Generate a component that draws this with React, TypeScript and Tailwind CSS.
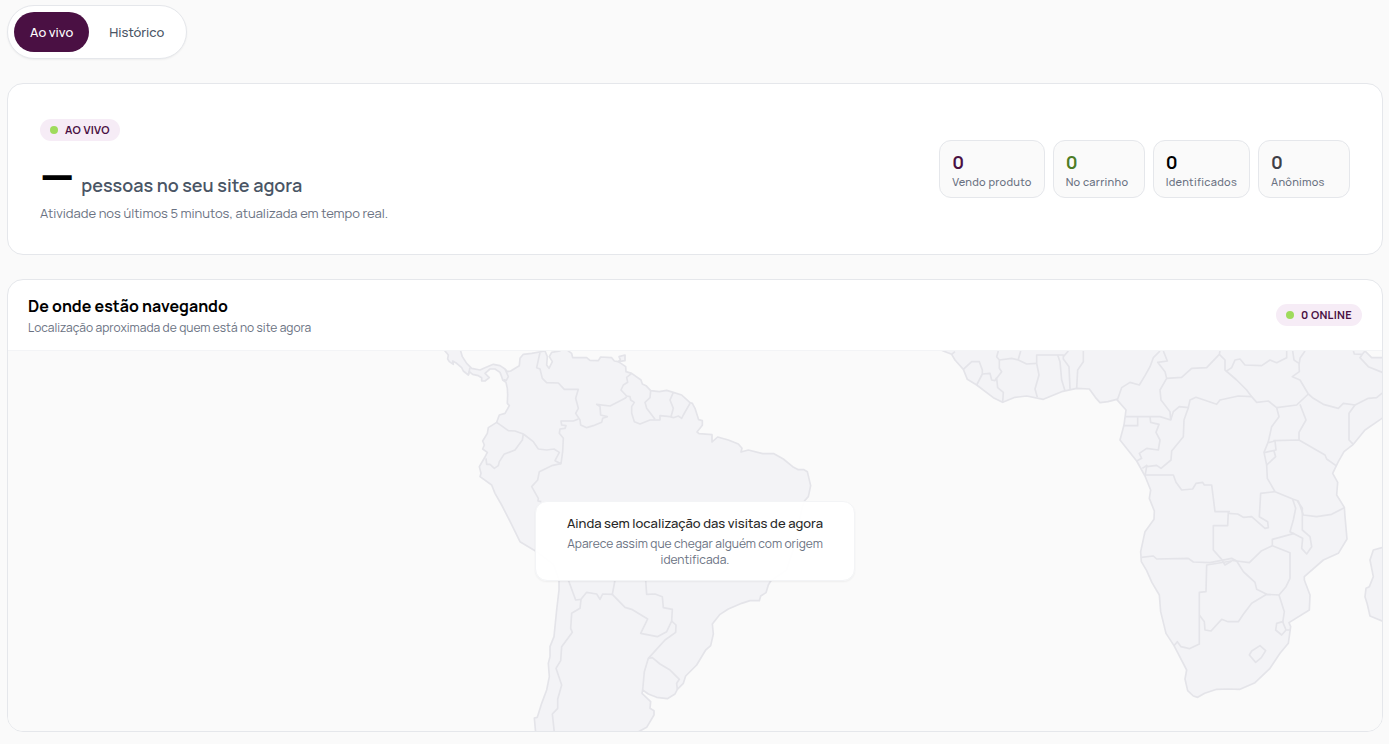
import { useState } from 'react'
import clsx from 'clsx'

const STATS = [
  { label: 'Vendo produto', value: 0, color: 'text-[#4a1043]' },
  { label: 'No carrinho', value: 0, color: 'text-[#4d7c26]' },
  { label: 'Identificados', value: 0, color: 'text-black' },
  { label: 'Anônimos', value: 0, color: 'text-zinc-700' },
]

// Land masses, in map units (3 per pixel at the default width)
const LAND = [
  // Central + South America
  'M1305 -8L1311 0 1321 12 1319 24 1324 32 1336 40 1334 30 1346 37 1361 50 1366 60 1381 72 1384 62 1394 70 1411 74 1421 80 1421 90 1431 90 1444 80 1431 67 1446 54 1461 54 1476 64 1481 77 1484 87 1494 94 1498 112 1499 132 1498 157 1504 164 1491 187 1474 192 1466 214 1441 230 1438 247 1424 270 1429 282 1424 294 1438 304 1431 318 1414 347 1419 367 1416 377 1451 402 1461 427 1481 462 1508 515 1536 572 1581 599 1636 640 1653 687 1653 717 1646 777 1638 857 1626 887 1626 917 1621 937 1624 977 1616 1017 1601 1057 1588 1099 1579 1101 1583 1145 1886 1145 1916 1129 1938 1092 1938 1079 1926 1072 1928 1052 1902 1027 1904 1017 1921 1029 1946 1039 1978 1043 2001 1029 2008 1015 2026 997 2033 975 2066 942 2093 897 2108 884 2116 849 2113 819 2136 790 2161 774 2201 757 2226 749 2254 749 2258 735 2274 725 2281 702 2288 690 2336 657 2356 597 2381 477 2389 450 2401 437 2408 404 2398 362 2388 356 2371 356 2354 347 2326 324 2298 308 2264 308 2221 297 2199 303 2202 292 2191 279 2161 267 2129 258 2112 273 2112 251 2073 248 2067 243 2083 223 2083 209 2072 206 2061 172 2053 157 2046 155 2021 132 1996 124 1976 118 1954 122 1928 119 1914 104 1903 99 1899 87 1871 67 1854 62 1853 47 1831 32 1819 30 1811 20 1778 18 1771 29 1746 28 1736 20 1694 20 1691 7 1681 0 1676 -8 1660 -8 1656 0 1631 4 1624 17 1633 32 1623 52 1616 42 1618 17 1611 0 1571 7 1546 10 1536 22 1534 44 1508 60 1498 62 1491 54 1476 44 1456 40 1431 50 1416 57 1391 52 1376 37 1363 17 1358 0 1354 -8Z',
  // Trinidad
  'M1833 17L1851 12 1851 29 1831 32 1837 26Z',
  // Africa
  'M2790 -8L2806 0 2831 10 2841 27 2866 55 2878 85 2906 102 2956 140 2984 154 3021 139 3056 135 3106 145 3161 122 3206 112 3244 114 3262 139 3276 155 3300 152 3326 145 3354 177 3348 222 3336 267 3386 330 3411 375 3428 417 3424 442 3439 480 3438 505 3411 542 3398 602 3400 632 3416 659 3432 695 3454 732 3458 782 3474 847 3498 884 3536 957 3531 984 3539 1019 3556 1035 3569 1039 3590 1027 3626 1015 3660 1014 3696 1015 3741 995 3786 952 3816 907 3841 877 3848 827 3843 815 3904 777 3906 732 3889 687 3889 677 3946 627 3991 607 4017 564 4011 497 4009 469 3986 432 3989 394 3974 367 3991 332 4008 302 4036 280 4071 237 4122 202 4135 195 4135 18 4122 20 4091 20 4071 0 4065 -8Z',
  // Madagascar
  'M4135 588L4122 590 4096 597 4086 627 4096 677 4084 707 4074 712 4071 737 4078 760 4086 795 4122 810 4135 808Z',
]

const BORDERS = [
  // South America
  'M1386 50L1381 72',
  'M1491 54L1501 77 1495 88 1486 86',
  'M1596 4L1586 50 1596 54 1603 82 1616 95 1651 96 1669 115 1711 115 1703 142 1711 172 1703 187 1716 207 1718 222 1736 230 1756 224 1781 214 1784 202 1798 197 1778 192 1776 167 1766 160 1806 165 1831 152 1851 142 1856 137',
  'M1711 204L1696 210 1659 210 1661 222 1674 224 1671 232 1656 234 1654 247 1666 262 1664 302 1659 338 1641 329 1654 304 1638 294 1616 297 1591 294 1576 272 1546 249 1521 240 1501 239 1466 214',
  'M1871 67L1856 79 1859 94 1846 102 1839 117 1856 135 1866 137 1868 147 1879 154 1871 167 1871 187 1879 212 1896 219 1926 207 1956 207 1956 194 1986 197 1996 200 2011 195 2021 202 2026 192 2046 157',
  'M1928 119L1926 140 1911 154 1916 172 1941 205',
  'M1996 124L1986 147 1996 172 1989 197',
  'M1546 249L1543 267 1521 297 1488 310 1474 332 1471 344 1459 352 1446 340 1436 340 1434 322',
  'M1659 338L1631 344 1594 362 1589 387 1571 407 1591 442 1590 450 1600 452',
  'M1681 687L1703 747 1719 745 1736 724 1766 729 1776 745 1784 729 1813 730 1821 687',
  'M1719 745L1716 772 1691 787 1688 832 1693 844 1661 887 1658 929 1644 952 1661 1002 1649 1045 1649 1072 1633 1089 1639 1145',
  'M1813 730L1851 769 1871 775 1919 804 1898 847 1948 857 1976 842 1991 810 1993 775 1966 770 1963 737 1941 729 1916 730 1913 687',
  'M1991 810L2004 822 2003 844 1971 867 1921 922 1909 962 1904 1017',
  'M1921 922L1933 920 1956 939 1986 957 2014 985 2006 997 2008 1015',
  // West Africa
  'M2831 10L2841 2',
  'M2866 55L2891 32 2914 32 2923 57 2923 69 2906 102',
  'M2923 69L2946 67 2951 87 2961 89 2966 80',
  'M2971 0L2966 17 2974 27 2974 52 2981 62 2966 82 2969 110 2986 124 2984 154',
  'M2974 27L3011 22 3031 27 3056 39 3086 37M3038 0L3031 25',
  'M3088 139L3081 114 3093 72 3086 37 3086 12 3149 12 3156 32 3161 87 3171 119',
  'M3149 12L3166 12 3166 24 3183 47 3186 114M3166 17L3181 0',
  'M3206 112L3209 57 3226 32 3226 0',
  // Central Africa
  'M3328 147L3341 110 3366 94 3394 102 3411 74 3426 47 3436 20 3456 0',
  'M3466 0L3478 30 3449 34 3471 62 3476 82 3456 117 3459 147 3486 182 3488 207 3456 197 3354 197',
  'M3476 82L3521 79 3551 52 3596 50 3634 10 3636 0',
  'M3634 10L3651 27 3651 57 3686 87 3716 117 3731 137',
  'M3656 60L3671 50 3681 27 3696 24 3711 42 3761 44 3786 27 3806 35 3836 20 3836 0',
  'M3488 207L3496 182 3514 167 3541 170 3546 147 3564 139 3626 160 3636 147 3691 135 3731 137 3746 154 3781 150 3806 170 3866 162 3901 129',
  'M3541 170L3528 207 3526 257 3491 300 3489 327 3459 352 3446 343 3416 347 3411 375M3403 352L3418 342',
  'M3426 197L3428 214 3453 220 3444 244 3456 267 3451 297 3416 292 3394 307 3401 322 3386 330',
  'M3348 224L3389 224 3389 199',
  'M3411 372L3496 372 3504 394 3521 417 3554 414 3564 397 3584 394 3589 402 3611 402 3621 482 3666 482',
  'M3661 487L3689 489 3706 499 3731 497 3771 532 3781 530 3779 512 3754 497 3758 427 3801 422',
  // Southern Africa
  'M3661 482L3659 524 3616 524 3616 597 3641 625 3651 642 3671 630',
  'M3400 619L3436 615 3446 624 3541 622 3556 633 3606 635 3671 622 3686 630',
  'M3671 630L3596 642 3594 722 3574 724 3574 879 3544 893 3519 887 3508 872 3498 884',
  'M3574 792L3589 812 3591 837 3609 840 3641 805 3660 812 3691 812 3706 790 3731 757 3776 730 3813 732',
  'M3686 630L3706 662 3741 694 3746 715 3776 730',
  'M3671 628L3686 630 3724 635 3761 599 3793 584 3846 605 3846 682 3834 707 3813 732 3829 782 3824 815',
  'M3806 817L3824 812 3834 837 3821 852 3803 837ZM3834 837L3848 837',
  'M3724 912L3731 900 3756 884 3773 899 3760 920 3743 934Z',
  'M3793 584L3793 565 3859 547',
  'M3854 445L3863 472 3856 507 3846 542 3884 562 3881 592 3896 609 3911 587 3906 557 3883 537 3883 472 3868 450',
  // East Africa
  'M3801 422L3856 445 3871 450 3886 492 3926 497 3971 490 4009 470',
  'M3806 170L3813 197 3791 227 3781 272 3768 304 3776 342 3778 382 3801 422',
  'M3781 275L3801 270 3804 297 3769 305M3798 300L3803 317 3776 342',
  'M3876 160L3894 207 3873 244 3873 267',
  'M3796 269L3873 267 3951 312 3956 324 3984 344',
  'M3901 129L3916 142 3946 160 3991 172 4006 157 4041 162 4081 142 4106 140 4130 120',
  'M4041 162L4023 187 4023 267 4036 280',
  'M3854 0L3858 27 3873 37 3874 62 3853 77 3876 87 3901 129M3891 0L3876 22 3873 42',
  'M4036 0L4039 9 4063 10 4056 20 4081 47 4130 67M4063 10L4071 0',
]

function LiveBadge({ children }: { children: React.ReactNode }) {
  return (
    <span className="flex h-[22px] items-center gap-[7px] rounded-full bg-[#f6ecf6] px-[10px] text-[11px] font-bold tracking-wide text-[#4a1043]">
      <span className="h-2 w-2 rounded-full bg-[#9fdb5c]"></span>
      {children}
    </span>
  )
}

function VisitorMap() {
  return (
    <svg viewBox="0 0 4122 1140" className="block w-full" aria-hidden="true">
      <g fill="#f3f3f6" stroke="#e4e4e9" strokeWidth="5" strokeLinejoin="round">
        {LAND.map((d) => (
          <path key={d} d={d} />
        ))}
      </g>
      <g fill="none" stroke="#e4e4e9" strokeWidth="5" strokeLinejoin="round">
        {BORDERS.map((d) => (
          <path key={d} d={d} />
        ))}
      </g>
    </svg>
  )
}

export default function App() {
  const [tab, setTab] = useState('live')

  const tabClass = (active: boolean) =>
    clsx(
      'h-10 rounded-full px-4 text-[13px] leading-5 font-medium',
      active ? 'bg-[#4a1043] text-white' : 'text-gray-600'
    )

  return (
    <main className="min-h-screen bg-[#fafafa] pt-[5px] pr-[6px] pb-3 pl-[7px] font-['Manrope','Inter',sans-serif] text-black">
      <div className="inline-flex gap-1 rounded-full border border-gray-200 bg-white p-[6px] align-top shadow-xs">
        <button type="button" className={tabClass(tab === 'live')} onClick={() => setTab('live')}>
          Ao vivo
        </button>
        <button type="button" className={tabClass(tab === 'history')} onClick={() => setTab('history')}>
          Histórico
        </button>
      </div>

      <section className="mt-6 flex flex-wrap items-center justify-between gap-6 rounded-2xl border border-gray-200 bg-white p-8">
        <div>
          <div className="flex pt-[3px]">
            <LiveBadge>AO VIVO</LiveBadge>
          </div>
          <h1 className="mt-[14px] flex items-baseline gap-2">
            <span className="text-[44px] leading-10 font-extrabold tracking-tight">—</span>
            <span className="text-lg leading-7 font-semibold text-gray-600">pessoas no seu site agora</span>
          </h1>
          <p className="mt-[5px] text-[13px] leading-[18px] text-gray-500">
            Atividade nos últimos 5 minutos, atualizada em tempo real.
          </p>
        </div>
        <dl className="flex flex-wrap gap-2">
          {STATS.map((stat) => (
            <div
              key={stat.label}
              className="flex min-w-[92px] flex-col-reverse rounded-xl border border-gray-200 bg-[#fafafa] px-3 pt-[9px] pb-[7px]"
            >
              <dt className="text-[11px] leading-4 font-medium tracking-wide whitespace-nowrap text-gray-500">{stat.label}</dt>
              <dd className={clsx('text-lg leading-6 font-bold', stat.color)}>{stat.value}</dd>
            </div>
          ))}
        </dl>
      </section>

      <section className="mt-6 overflow-hidden rounded-2xl border border-gray-200 bg-white">
        <header className="flex items-center justify-between border-b border-gray-100 px-5 py-[14px]">
          <div>
            <h2 className="text-base leading-6 font-bold">De onde estão navegando</h2>
            <p className="mt-[2px] text-xs text-gray-500">Localização aproximada de quem está no site agora</p>
          </div>
          <LiveBadge>0 ONLINE</LiveBadge>
        </header>
        <div className="relative bg-[#fafafa]">
          <VisitorMap />
          <div className="absolute inset-0 flex items-center justify-center">
            <div className="w-80 rounded-xl border border-gray-100 bg-white/95 px-6 py-3 text-center shadow-xs">
              <p className="text-[13px] leading-[18px] font-medium text-neutral-800">Ainda sem localização das visitas de agora</p>
              <p className="mt-1 text-xs text-gray-500">Aparece assim que chegar alguém com origem identificada.</p>
            </div>
          </div>
        </div>
      </section>
    </main>
  )
}
